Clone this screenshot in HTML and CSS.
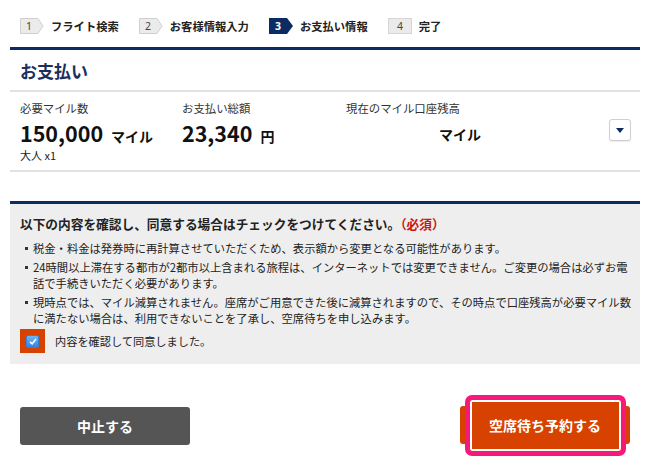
FILE: index.html
```html
<!DOCTYPE html>
<html lang="ja">
<head>
<meta charset="utf-8">
<title>お支払い情報</title>
<link rel="stylesheet" href="styles.css">
</head>
<body>
<div class="page">
  <ol class="steps">
    <li class="step">
      <svg class="badge" width="24" height="16" viewBox="0 0 24 16"><polygon points="0.5,0.5 18,0.5 23,8 18,15.5 0.5,15.5" fill="#ebebeb" stroke="#cfcfcf"/><text x="9" y="12" text-anchor="middle" class="num">1</text></svg>
      <span class="step-label">フライト検索</span>
    </li>
    <li class="step">
      <svg class="badge" width="24" height="16" viewBox="0 0 24 16"><polygon points="0.5,0.5 18,0.5 23,8 18,15.5 0.5,15.5" fill="#ebebeb" stroke="#cfcfcf"/><text x="9" y="12" text-anchor="middle" class="num">2</text></svg>
      <span class="step-label">お客様情報入力</span>
    </li>
    <li class="step">
      <svg class="badge" width="24" height="16" viewBox="0 0 24 16"><polygon points="0,0 18,0 24,8 18,16 0,16" fill="#0b2c62"/><text x="9" y="12" text-anchor="middle" class="num num-on">3</text></svg>
      <span class="step-label">お支払い情報</span>
    </li>
    <li class="step">
      <svg class="badge" width="24" height="16" viewBox="0 0 24 16"><rect x="0.5" y="0.5" width="23" height="15" fill="#ebebeb" stroke="#d6d6d6"/><text x="12" y="12" text-anchor="middle" class="num">4</text></svg>
      <span class="step-label">完了</span>
    </li>
  </ol>

  <div class="navy-rule"></div>
  <h1 class="title">お支払い</h1>

  <div class="summary">
    <div class="col col-1">
      <div class="label">必要マイル数</div>
      <div class="value"><span class="big">150,000</span><span class="unit">マイル</span></div>
      <div class="sub">大人 x1</div>
    </div>
    <div class="col col-2">
      <div class="label">お支払い総額</div>
      <div class="value"><span class="big">23,340</span><span class="unit">円</span></div>
    </div>
    <div class="col col-3">
      <div class="label">現在のマイル口座残高</div>
      <div class="value value-balance"><span class="unit">マイル</span></div>
    </div>
    <button class="toggle" type="button" aria-label="開く">
      <svg width="8" height="5" viewBox="0 0 8 5"><polygon points="0,0 8,0 4,5" fill="#0b2c62"/></svg>
    </button>
  </div>

  <div class="navy-rule navy-rule-2"></div>
  <div class="notice">
    <p class="notice-title">以下の内容を確認し、同意する場合はチェックをつけてください。<span class="required">（必須）</span></p>
    <ul class="notes">
      <li>税金・料金は発券時に再計算させていただくため、表示額から変更となる可能性があります。</li>
      <li>24時間以上滞在する都市が2都市以上含まれる旅程は、インターネットでは変更できません。ご変更の場合は必ずお電<br>話で手続きいただく必要があります。</li>
      <li>現時点では、マイル減算されません。座席がご用意できた後に減算されますので、その時点で口座残高が必要マイル数<br>に満たない場合は、利用できないことを了承し、空席待ちを申し込みます。</li>
    </ul>
    <label class="agree">
      <span class="check-frame"><span class="check-box"><svg width="8" height="7" viewBox="0 0 8 7"><polyline points="1,3.8 3.2,5.8 7,1" fill="none" stroke="#fff" stroke-width="1.6"/></svg></span></span>
      <span class="agree-text">内容を確認して同意しました。</span>
    </label>
  </div>

  <div class="actions">
    <button class="btn btn-cancel" type="button">中止する</button>
    <button class="btn btn-submit" type="button"><span class="btn-text">空席待ち予約する</span></button>
  </div>
</div>
</body>
</html>
```

FILE: styles.css
```css
*, *::before, *::after { box-sizing: border-box; }
html, body { margin: 0; padding: 0; background: #fff; }
body {
  font-family: "Noto Sans CJK JP", "Noto Sans", sans-serif;
  color: #222;
  width: 650px;
  height: 465px;
  overflow: hidden;
}
.page { padding: 0 10px; }

.steps {
  list-style: none;
  margin: 0;
  padding: 17px 0 0 10px;
  display: flex;
  height: 47px;
}
.step {
  display: flex;
  align-items: center;
  height: 18px;
  margin-right: 20px;
}
.badge { display: block; margin-right: 7px; }
.num { font-family: "Noto Sans", sans-serif; font-size: 10.5px; fill: #444; }
.num-on { fill: #fff; font-weight: 700; }
.step-label { font-size: 11.3px; font-weight: 700; color: #222; line-height: 18px; }

.navy-rule { height: 3px; background: #0b2c62; }
.title {
  margin: 0;
  padding: 0 10px;
  height: 42px;
  line-height: 42px;
  font-size: 17px;
  font-weight: 700;
  color: #1b2f5e;
  border-bottom: 2px solid #e2e2e2;
}

.summary {
  display: flex;
  padding: 8px 9px 8px 10px;
  border-bottom: 2px solid #e2e2e2;
  height: 80px;
}
.col-1 { width: 162px; }
.col-2 { width: 164px; }
.col-3 { flex: 1; }
.label { font-size: 11.4px; line-height: 16px; color: #333; }
.value { margin-top: 4px; height: 26px; line-height: 26px; white-space: nowrap; }
.big { font-size: 21.5px; font-weight: 700; color: #111; letter-spacing: 0; }
.unit { font-size: 14px; font-weight: 700; color: #111; margin-left: 8px; }
.value-balance { padding-left: 85px; }
.sub { margin-top: 2px; font-size: 11px; line-height: 14px; color: #222; }
.toggle {
  width: 22px;
  height: 22px;
  margin-top: 19px;
  padding: 0;
  border: 1px solid #cfcfcf;
  border-radius: 3px;
  background: #fff;
  display: flex;
  align-items: center;
  justify-content: center;
  box-shadow: 0 1px 1px rgba(0,0,0,0.08);
}
.toggle svg { display: block; }

.navy-rule-2 { margin-top: 29px; }
.notice {
  background: #eeeeee;
  padding: 11px 0 11px 10px;
}
.notice-title {
  margin: 0;
  font-size: 12.7px;
  line-height: 18px;
  font-weight: 700;
  color: #222;
  white-space: nowrap;
}
.required { color: #c8160e; }
.notes {
  list-style: none;
  margin: 7px 0 0;
  padding: 0;
}
.notes li {
  display: flex;
  font-size: 11.3px;
  line-height: 16px;
  color: #222;
  margin-bottom: 3px;
  white-space: nowrap;
}
.notes li::before {
  content: "";
  flex: none;
  width: 3px;
  height: 3px;
  background: #333;
  margin: 7px 5px 0 5px;
}
.agree {
  display: flex;
  align-items: center;
  margin-top: 2px;
  height: 24px;
}
.check-frame {
  width: 25px;
  height: 24px;
  background: #d84200;
  display: flex;
  align-items: center;
  justify-content: center;
}
.check-box {
  width: 13px;
  height: 13px;
  border-radius: 2px;
  background: linear-gradient(#6fb6f5, #2f86e6);
  border: 1px solid #3a7fd0;
  display: flex;
  align-items: center;
  justify-content: center;
}
.check-box svg { display: block; }
.agree-text { margin-left: 10px; font-size: 11.2px; color: #222; }

.actions {
  display: flex;
  justify-content: space-between;
  padding: 0 10px;
  margin-top: 43px;
}
.btn {
  width: 170px;
  height: 38px;
  border: 0;
  border-radius: 3px;
  font-family: "Noto Sans CJK JP", sans-serif;
  font-size: 14px;
  font-weight: 700;
  color: #fff;
  padding: 0;
}
.btn-cancel { background: #555555; }
.btn-submit {
  background: #d84200;
  position: relative;
  margin-top: -1px;
}
.btn-submit::before {
  content: "";
  position: absolute;
  left: 5px;
  top: -11px;
  width: 161px;
  height: 61px;
  border: 5px solid #f7197a;
  border-radius: 7px;
  background: #d84200;
  box-shadow: inset 0 0 0 2px #ffffff;
  z-index: 0;
}
.btn-text { position: relative; z-index: 1; }
```
